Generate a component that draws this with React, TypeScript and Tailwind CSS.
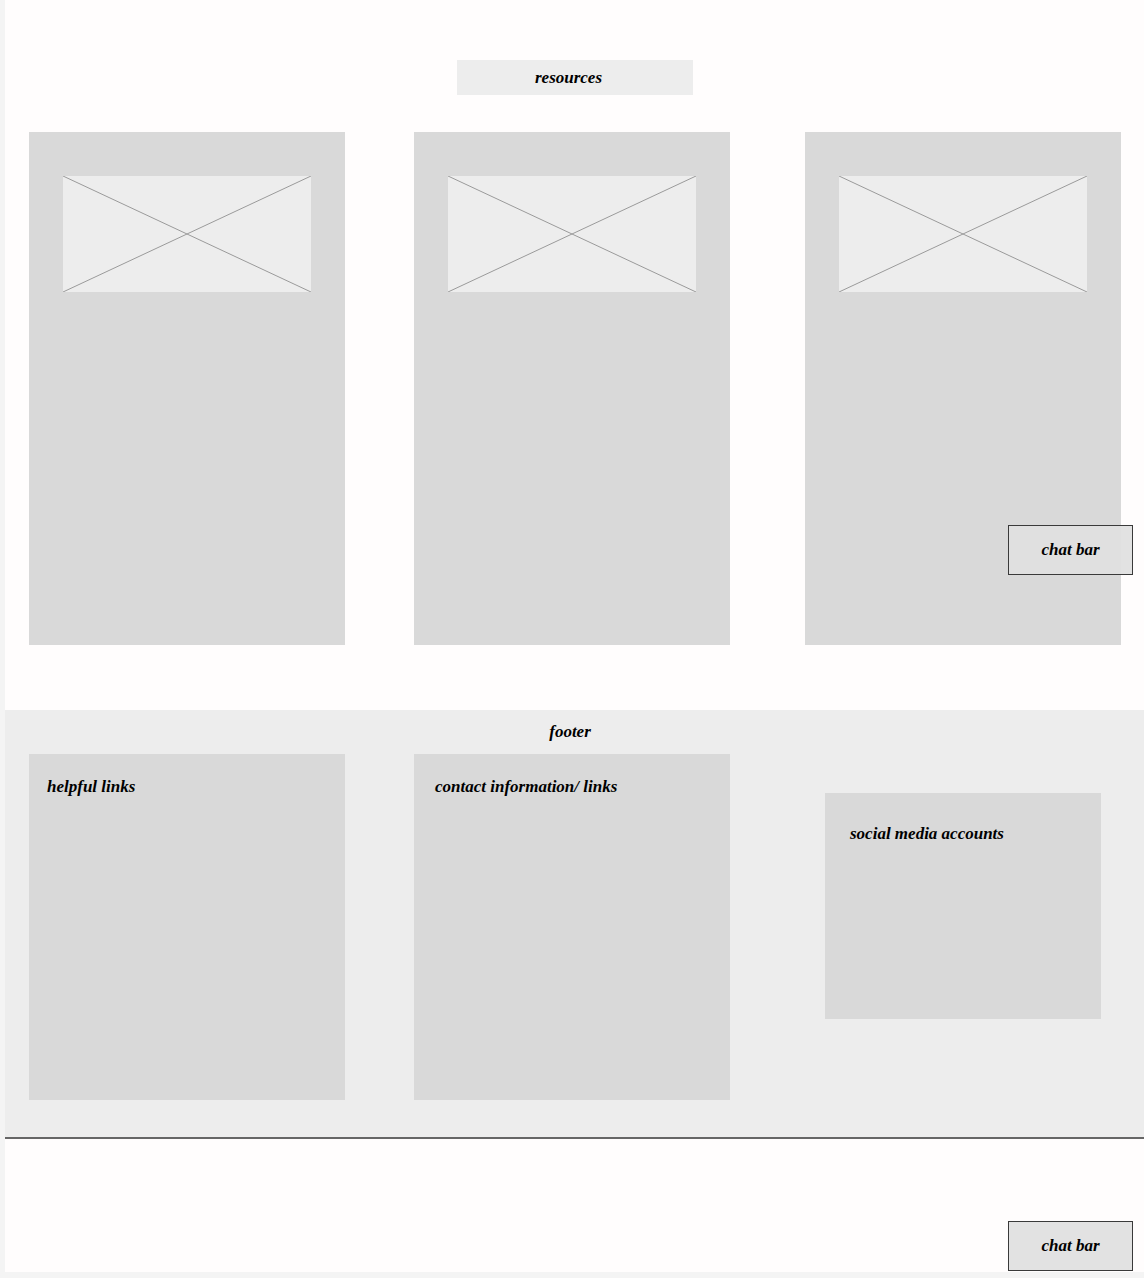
import React from "react";

const serif = "font-['Liberation_Serif','Times_New_Roman',serif] font-bold italic text-black";

function Placeholder() {
  return (
    <div className="mx-auto mt-[43px] h-[116px] w-[248px] bg-[#ededed]">
      <svg width="248" height="116" viewBox="0 0 248 116" preserveAspectRatio="none" className="block">
        <line x1="0" y1="0" x2="248" y2="116" stroke="#9a9a9a" strokeWidth="1" />
        <line x1="248" y1="0" x2="0" y2="116" stroke="#9a9a9a" strokeWidth="1" />
      </svg>
    </div>
  );
}

function ResourceCard({ className = "" }: { className?: string }) {
  return (
    <div className={`h-[513px] w-[316px] shrink-0 bg-[#d9d9d9] pt-px ${className}`}>
      <Placeholder />
    </div>
  );
}

function ChatBar({ className = "" }: { className?: string }) {
  return (
    <div
      className={`flex h-[50px] w-[125px] items-center justify-center border border-[#3a3a3a] bg-[#e0e0e0]/95 text-[17px] ${serif} ${className}`}
    >
      chat bar
    </div>
  );
}

export default function App() {
  return (
    <div className="min-h-[1278px] w-[1144px] bg-[#f4f4f4] pb-[6px] pl-[5px]">
      <div className="relative bg-[#fffdfd]">
        {/* resources title */}
        <div className="pt-[60px]">
          <div className={`mx-auto flex h-[35px] w-[236px] items-center justify-center bg-[#ededed] pr-[12px] text-[17px] ${serif}`}>
            resources
          </div>
        </div>

        {/* resource cards */}
        <div className="mt-[37px] flex pl-[24px]">
          <ResourceCard />
          <ResourceCard className="ml-[69px]" />
          <ResourceCard className="ml-[75px]" />
        </div>

        {/* footer */}
        <div className="mt-[65px] h-[429px] border-b-2 border-[#666] bg-[#ededed]">
          <div className={`flex h-[44px] items-center justify-center pr-[9px] text-[17px] ${serif}`}>
            footer
          </div>
          <div className="flex items-start pl-[24px]">
            <div className={`h-[346px] w-[316px] shrink-0 bg-[#d9d9d9] pl-[18px] pt-[23px] text-[17px] leading-[20px] ${serif}`}>
              helpful links
            </div>
            <div className={`ml-[69px] h-[346px] w-[316px] shrink-0 bg-[#d9d9d9] pl-[21px] pt-[23px] text-[17px] leading-[20px] ${serif}`}>
              contact information/ links
            </div>
            <div className={`ml-[95px] mt-[39px] h-[226px] w-[276px] shrink-0 bg-[#d9d9d9] pl-[25px] pt-[31px] text-[17px] leading-[20px] ${serif}`}>
              social media accounts
            </div>
          </div>
        </div>

        {/* bottom area */}
        <div className="flex h-[133px] items-end justify-end pb-px pr-[11px]">
          <ChatBar />
        </div>

        {/* floating chat bar over cards */}
        <ChatBar className="absolute left-[1003px] top-[525px]" />
      </div>
    </div>
  );
}
